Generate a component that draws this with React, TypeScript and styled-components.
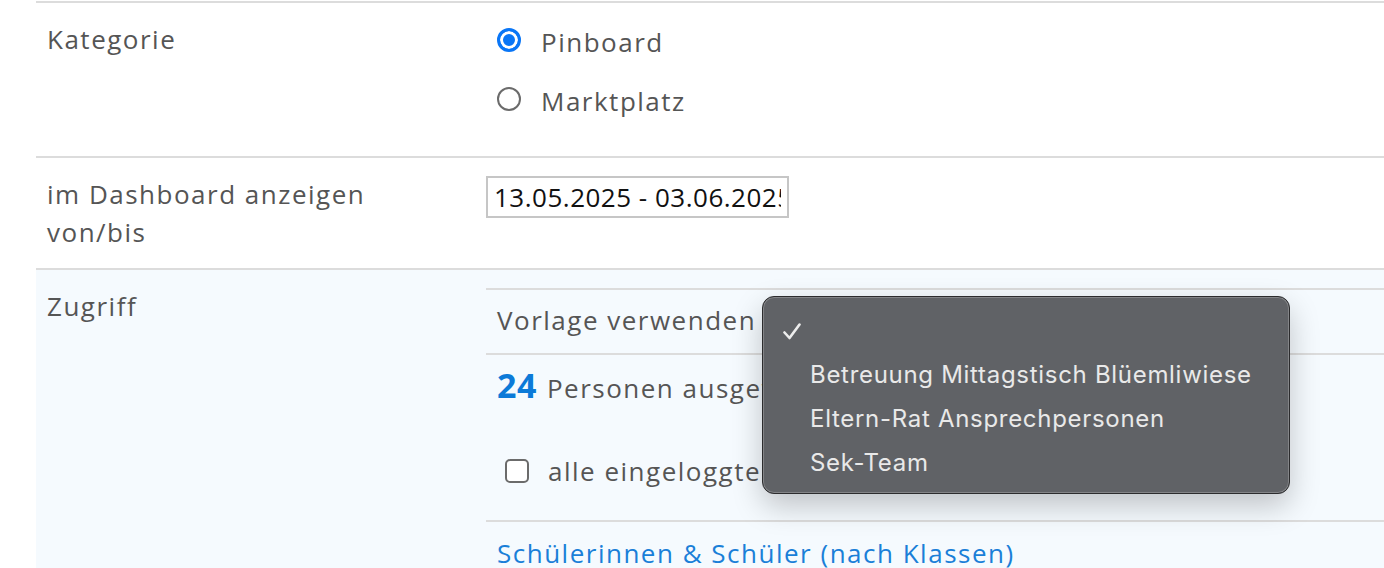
import React from "react";
import styled, { createGlobalStyle } from "styled-components";

const GlobalStyle = createGlobalStyle`
  body {
    margin: 0;
    background: #fff;
    font-family: "Open Sans", "Noto Sans", sans-serif;
    letter-spacing: 1.5px;
  }
`;

const Page = styled.div`
  padding: 1px 0 0 36px;
  height: 567px;
  overflow: hidden;
`;

const FormRow = styled.div<{ $tinted?: boolean }>`
  display: grid;
  grid-template-columns: 450px 1fr;
  border-top: 2px solid #dcdcdc;
  background: ${(p) => (p.$tinted ? "#f5fafe" : "#fff")};
`;

const Label = styled.div`
  padding: 17px 11px;
  font-size: 26px;
  line-height: 38px;
  color: #555;
`;

const Value = styled.div<{ $pad?: string }>`
  padding: ${(p) => p.$pad || "0"};
  position: relative;
`;

const RadioOption = styled.label`
  display: flex;
  align-items: center;
  height: 59px;
  padding-left: 11px;
  font-size: 26px;
  color: #555;
  gap: 20px;
`;

const RadioDot = styled.span<{ $checked?: boolean }>`
  width: 24px;
  height: 24px;
  box-sizing: border-box;
  border-radius: 50%;
  border: ${(p) => (p.$checked ? "3px solid #0a76f6" : "2px solid #6b6b6b")};
  background: ${(p) => (p.$checked ? "#0a76f6" : "#fff")};
  box-shadow: ${(p) => (p.$checked ? "inset 0 0 0 3px #fff" : "none")};
  margin-top: -4px;
`;

const DateInput = styled.input`
  width: 303px;
  height: 42px;
  box-sizing: border-box;
  border: 2px solid #c6c6c6;
  padding: 0 6px;
  font-family: "Open Sans", sans-serif;
  font-size: 26px;
  letter-spacing: 0.5px;
  color: #111;
  background: #fff;
  outline: none;
`;

const SubTable = styled.div`
  position: relative;
  margin-right: -40px;
`;

const SubRow = styled.div<{ $pad?: string }>`
  border-top: 2px solid #dcdcdc;
  padding: ${(p) => p.$pad || "11px 11px 13px"};
  font-size: 26px;
  line-height: 39px;
  color: #555;
  white-space: nowrap;
`;

const Count = styled.span`
  font-size: 34px;
  font-weight: 700;
  letter-spacing: 0.5px;
  color: #0c7ad8;
  margin-right: 10px;
`;

const CheckLine = styled.label`
  display: flex;
  align-items: center;
  gap: 19px;
  margin-top: 44px;
  padding-left: 8px;
`;

const CheckBox = styled.span`
  width: 24px;
  height: 24px;
  box-sizing: border-box;
  border: 2px solid #6b6b6b;
  border-radius: 5px;
  background: #fff;
  margin-top: -2px;
`;

const BlueLink = styled.a`
  color: #1a7fd8;
  text-decoration: none;
`;

const Menu = styled.div`
  position: absolute;
  left: 276px;
  top: 8px;
  width: 528px;
  box-sizing: border-box;
  padding: 11px 0 9px;
  background: #606266;
  border: 1px solid #2c2c2e;
  border-radius: 12px;
  box-shadow: inset 0 0 0 1px rgba(255, 255, 255, 0.22),
    0 12px 30px rgba(0, 0, 0, 0.22);
  font-family: Inter, "Noto Sans", sans-serif;
  font-size: 24px;
  letter-spacing: 0.7px;
  color: #e9e9e9;
`;

const MenuItem = styled.div`
  display: flex;
  align-items: center;
  height: 44px;
  padding-left: 47px;
  position: relative;
  white-space: nowrap;
`;

const Tick = styled.svg`
  position: absolute;
  left: 20px;
  top: 15px;
`;

const templates = [
  "Betreuung Mittagstisch Blüemliwiese",
  "Eltern-Rat Ansprechpersonen",
  "Sek-Team",
];

export default function App() {
  return (
    <>
      <GlobalStyle />
      <Page>
        <FormRow>
          <Label style={{ paddingBottom: 0 }}>Kategorie</Label>
          <Value $pad="9px 0 26px">
            <RadioOption>
              <RadioDot $checked />
              Pinboard
            </RadioOption>
            <RadioOption>
              <RadioDot />
              Marktplatz
            </RadioOption>
          </Value>
        </FormRow>
        <FormRow>
          <Label>
            im Dashboard anzeigen
            <br />
            von/bis
          </Label>
          <Value $pad="18px 0 0">
            <DateInput readOnly value="13.05.2025 - 03.06.2025" />
          </Value>
        </FormRow>
        <FormRow $tinted>
          <Label>Zugriff</Label>
          <Value $pad="18px 0 0">
            <SubTable>
              <SubRow>Vorlage verwenden</SubRow>
              <SubRow $pad="11px 11px 29px">
                <div>
                  <Count>24</Count>Personen ausgewählt
                </div>
                <CheckLine>
                  <CheckBox />
                  alle eingeloggten Personen
                </CheckLine>
              </SubRow>
              <SubRow $pad="12px 11px 20px">
                <BlueLink>Schülerinnen &amp; Schüler (nach Klassen)</BlueLink>
              </SubRow>
              <Menu>
                <MenuItem>
                  <Tick width="18" height="17" viewBox="0 0 18 17">
                    <path
                      d="M1.5 9.5 L6.5 15 L16.5 1.5"
                      fill="none"
                      stroke="#ededed"
                      strokeWidth="2.6"
                      strokeLinecap="round"
                      strokeLinejoin="round"
                    />
                  </Tick>
                </MenuItem>
                {templates.map((t) => (
                  <MenuItem key={t}>{t}</MenuItem>
                ))}
              </Menu>
            </SubTable>
          </Value>
        </FormRow>
      </Page>
    </>
  );
}
